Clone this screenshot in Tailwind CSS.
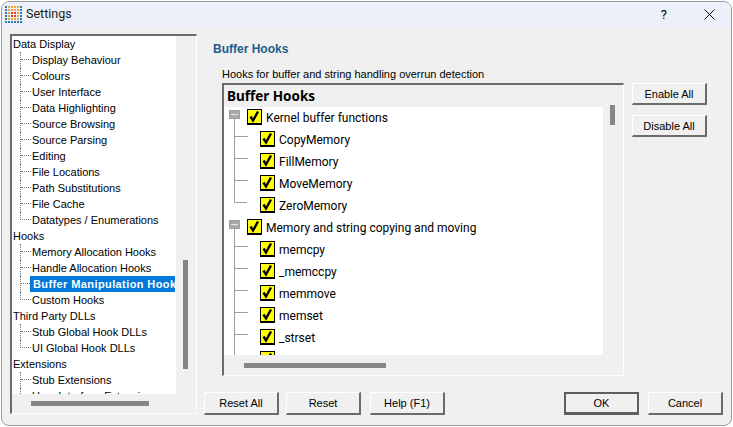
<!DOCTYPE html>
<html lang="en">
<head>
    <meta charset="UTF-8">
    <title>Settings</title>
    <script src="https://cdn.jsdelivr.net/npm/@tailwindcss/browser@4"></script>
</head>
<body class="w-[733px] h-[427px] overflow-hidden bg-white font-['Liberation_Sans',sans-serif] text-[11px] text-black">
    <svg class="hidden">
        <symbol id="check" viewBox="0 0 15 16">
            <rect x="0.5" y="0.5" width="14" height="14" fill="#ffff00" stroke="#000"/>
            <rect x="0" y="14" width="15" height="2" fill="#000"/>
            <path d="M3.5 7.5 6 11.5 11 2.5" fill="none" stroke="#000" stroke-width="2.4"/>
        </symbol>
    </svg>

    <div class="ml-px mt-px w-[731px] h-[425px] flex flex-col bg-[#f0f0f0] border border-[#9a9a9a] rounded-lg overflow-hidden">
        <!-- title bar -->
        <div class="h-[25px] shrink-0 flex items-center bg-[#ecf1f9]">
            <svg class="ml-[3px] w-[17px] h-[17px]" viewBox="0 0 17 17">
                <path fill="#2f78b8" d="M0 0h2v2H0zM15 0h2v2h-2zM0 3h2v2H0zM15 3h2v2h-2zM0 6h2v2H0zM15 6h2v2h-2zM0 9h2v2H0zM15 9h2v2h-2zM0 12h2v2H0zM15 12h2v2h-2zM0 15h2v2H0zM3 15h2v2H3zM6 15h2v2H6zM9 15h2v2H9zM12 15h2v2h-2zM15 15h2v2h-2z"/>
                <path fill="#f2a33a" d="M3 0h2v2H3zM6 0h2v2H6zM9 0h2v2H9zM12 0h2v2h-2zM3 3h2v2H3zM6 3h2v2H6zM9 3h2v2H9zM12 3h2v2h-2zM3 6h2v2H3zM12 6h2v2h-2zM3 9h2v2H3zM12 9h2v2h-2zM3 12h2v2H3zM6 12h2v2H6zM9 12h2v2H9zM12 12h2v2h-2z"/>
                <path fill="#d8402f" d="M6 6h2v2H6zM9 6h2v2H9zM6 9h2v2H6zM9 9h2v2H9z"/>
            </svg>
            <span class="ml-[4px] font-['Roboto',sans-serif] text-[12.5px] text-[#1a1a1a]">Settings</span>
            <span class="ml-auto mr-[37px] font-['Roboto',sans-serif] text-[13px]">?</span>
            <svg class="mr-[16px] w-[11px] h-[11px]" viewBox="0 0 11 11"><path d="M0.5 0.5l10 10M10.5 0.5l-10 10" stroke="#111" fill="none"/></svg>
        </div>

        <div class="flex flex-1 min-h-0 pl-[8px] pt-[7px]">
            <!-- left tree -->
            <div class="w-[187px] h-[380px] shrink-0 flex flex-col border-l-2 border-t-2 border-l-[#6b6b6b] border-t-[#6b6b6b] border-r border-b border-r-white border-b-white">
                <div class="flex flex-1 min-h-0">
                    <div class="w-[164px] h-[358px] overflow-hidden bg-white leading-[16px]">
                        <div class="h-4 pl-px whitespace-nowrap">Data Display</div>
                        <div class="h-4 flex pl-[8px]"><span class="w-[11px] h-full border-l border-dotted border-[#777]"><span class="block h-[8px] border-b border-dotted border-[#777]"></span></span><span class="ml-px">Display Behaviour</span></div>
                        <div class="h-4 flex pl-[8px]"><span class="w-[11px] h-full border-l border-dotted border-[#777]"><span class="block h-[8px] border-b border-dotted border-[#777]"></span></span><span class="ml-px">Colours</span></div>
                        <div class="h-4 flex pl-[8px]"><span class="w-[11px] h-full border-l border-dotted border-[#777]"><span class="block h-[8px] border-b border-dotted border-[#777]"></span></span><span class="ml-px">User Interface</span></div>
                        <div class="h-4 flex pl-[8px]"><span class="w-[11px] h-full border-l border-dotted border-[#777]"><span class="block h-[8px] border-b border-dotted border-[#777]"></span></span><span class="ml-px">Data Highlighting</span></div>
                        <div class="h-4 flex pl-[8px]"><span class="w-[11px] h-full border-l border-dotted border-[#777]"><span class="block h-[8px] border-b border-dotted border-[#777]"></span></span><span class="ml-px">Source Browsing</span></div>
                        <div class="h-4 flex pl-[8px]"><span class="w-[11px] h-full border-l border-dotted border-[#777]"><span class="block h-[8px] border-b border-dotted border-[#777]"></span></span><span class="ml-px">Source Parsing</span></div>
                        <div class="h-4 flex pl-[8px]"><span class="w-[11px] h-full border-l border-dotted border-[#777]"><span class="block h-[8px] border-b border-dotted border-[#777]"></span></span><span class="ml-px">Editing</span></div>
                        <div class="h-4 flex pl-[8px]"><span class="w-[11px] h-full border-l border-dotted border-[#777]"><span class="block h-[8px] border-b border-dotted border-[#777]"></span></span><span class="ml-px">File Locations</span></div>
                        <div class="h-4 flex pl-[8px]"><span class="w-[11px] h-full border-l border-dotted border-[#777]"><span class="block h-[8px] border-b border-dotted border-[#777]"></span></span><span class="ml-px">Path Substitutions</span></div>
                        <div class="h-4 flex pl-[8px]"><span class="w-[11px] h-full border-l border-dotted border-[#777]"><span class="block h-[8px] border-b border-dotted border-[#777]"></span></span><span class="ml-px">File Cache</span></div>
                        <div class="h-4 flex pl-[8px]"><span class="w-[11px] h-[8px] border-l border-b border-dotted border-[#777]"></span><span class="ml-px">Datatypes / Enumerations</span></div>
                        <div class="h-4 pl-px">Hooks</div>
                        <div class="h-4 flex pl-[8px]"><span class="w-[11px] h-full border-l border-dotted border-[#777]"><span class="block h-[8px] border-b border-dotted border-[#777]"></span></span><span class="ml-px">Memory Allocation Hooks</span></div>
                        <div class="h-4 flex pl-[8px]"><span class="w-[11px] h-full border-l border-dotted border-[#777]"><span class="block h-[8px] border-b border-dotted border-[#777]"></span></span><span class="ml-px">Handle Allocation Hooks</span></div>
                        <div class="h-4 flex pl-[8px]"><span class="w-[10px] shrink-0 h-full border-l border-dotted border-[#777]"><span class="block h-[8px] border-b border-dotted border-[#777]"></span></span><span class="pl-[3px] flex-1 min-w-0 mr-px bg-[#0078d7] text-white font-bold tracking-[0.4px] whitespace-nowrap overflow-hidden">Buffer Manipulation Hooks</span></div>
                        <div class="h-4 flex pl-[8px]"><span class="w-[11px] h-[8px] border-l border-b border-dotted border-[#777]"></span><span class="ml-px">Custom Hooks</span></div>
                        <div class="h-4 pl-px">Third Party DLLs</div>
                        <div class="h-4 flex pl-[8px]"><span class="w-[11px] h-full border-l border-dotted border-[#777]"><span class="block h-[8px] border-b border-dotted border-[#777]"></span></span><span class="ml-px">Stub Global Hook DLLs</span></div>
                        <div class="h-4 flex pl-[8px]"><span class="w-[11px] h-[8px] border-l border-b border-dotted border-[#777]"></span><span class="ml-px">UI Global Hook DLLs</span></div>
                        <div class="h-4 pl-px">Extensions</div>
                        <div class="h-4 flex pl-[8px]"><span class="w-[11px] h-full border-l border-dotted border-[#777]"><span class="block h-[8px] border-b border-dotted border-[#777]"></span></span><span class="ml-px">Stub Extensions</span></div>
                        <div class="h-4 flex pl-[8px]"><span class="w-[11px] h-[8px] border-l border-b border-dotted border-[#777]"></span><span class="ml-px whitespace-nowrap">User Interface Extensions</span></div>
                    </div>
                    <!-- vertical scrollbar -->
                    <div class="flex-1 pt-[224px] pl-[7px]"><div class="w-[5px] h-[109px] bg-[#868686]"></div></div>
                </div>
                <!-- horizontal scrollbar -->
                <div class="h-[19px] pt-[7px] pl-[19px]"><div class="w-[118px] h-[5px] bg-[#868686]"></div></div>
            </div>

            <!-- right column -->
            <div class="flex-1 flex flex-col min-w-0 pl-[6px]">
                <div class="h-[19px] pl-[10px] mt-[6px] text-[12px] font-bold text-[#1b5e8c]">Buffer Hooks</div>
                <div class="h-[16px] mt-[7px] pl-[19px] leading-[16px]">Hooks for buffer and string handling overrun detection</div>
                <div class="flex pl-[19px] mt-px">
                    <!-- hook grid -->
                    <div class="w-[402px] h-[293px] flex flex-col border-l-2 border-t-2 border-l-[#6b6b6b] border-t-[#6b6b6b] border-r border-b border-r-white border-b-white">
                        <div class="h-[22px] shrink-0 pl-[3px] font-['Noto_Sans',sans-serif] text-[13.5px] font-bold leading-[22px]">Buffer Hooks</div>
                        <div class="flex">
                            <div class="w-[379px] h-[248px] overflow-hidden bg-white font-['Roboto',sans-serif] text-[12px] leading-[22px]">
                                <div class="h-[22px] flex pl-[5px]">
                                    <span class="w-[18px] h-full flex flex-col"><span class="mt-[3px] w-[11px] h-[9px] bg-[#a8a8a8] border border-[#a0a0a0] flex items-center justify-center"><span class="w-[7px] h-px bg-[#e8e8e8]"></span></span><span class="ml-[5px] w-px flex-1 bg-[#a0a0a0]"></span></span>
                                    <svg class="mt-[2px] w-[15px] h-[16px]"><use href="#check"/></svg>
                                    <span class="ml-[4px]">Kernel buffer functions</span>
                                </div>
                                <div class="h-[22px] flex pl-[10px]"><span class="w-[26px] h-full border-l border-[#a0a0a0]"><span class="block w-[13px] h-[8px] border-b border-[#a0a0a0]"></span></span><svg class="mt-[2px] w-[15px] h-[16px]"><use href="#check"/></svg><span class="ml-[4px]">CopyMemory</span></div>
                                <div class="h-[22px] flex pl-[10px]"><span class="w-[26px] h-full border-l border-[#a0a0a0]"><span class="block w-[13px] h-[8px] border-b border-[#a0a0a0]"></span></span><svg class="mt-[2px] w-[15px] h-[16px]"><use href="#check"/></svg><span class="ml-[4px]">FillMemory</span></div>
                                <div class="h-[22px] flex pl-[10px]"><span class="w-[26px] h-full border-l border-[#a0a0a0]"><span class="block w-[13px] h-[8px] border-b border-[#a0a0a0]"></span></span><svg class="mt-[2px] w-[15px] h-[16px]"><use href="#check"/></svg><span class="ml-[4px]">MoveMemory</span></div>
                                <div class="h-[22px] flex pl-[10px]"><span class="w-[26px] h-[8px]"><span class="block w-[13px] h-[8px] border-l border-b border-[#a0a0a0]"></span></span><svg class="mt-[2px] w-[15px] h-[16px]"><use href="#check"/></svg><span class="ml-[4px]">ZeroMemory</span></div>
                                <div class="h-[22px] flex pl-[5px]">
                                    <span class="w-[18px] h-full flex flex-col"><span class="mt-[3px] w-[11px] h-[9px] bg-[#a8a8a8] border border-[#a0a0a0] flex items-center justify-center"><span class="w-[7px] h-px bg-[#e8e8e8]"></span></span><span class="ml-[5px] w-px flex-1 bg-[#a0a0a0]"></span></span>
                                    <svg class="mt-[2px] w-[15px] h-[16px]"><use href="#check"/></svg>
                                    <span class="ml-[4px]">Memory and string copying and moving</span>
                                </div>
                                <div class="h-[22px] flex pl-[10px]"><span class="w-[26px] h-full border-l border-[#a0a0a0]"><span class="block w-[13px] h-[8px] border-b border-[#a0a0a0]"></span></span><svg class="mt-[2px] w-[15px] h-[16px]"><use href="#check"/></svg><span class="ml-[4px]">memcpy</span></div>
                                <div class="h-[22px] flex pl-[10px]"><span class="w-[26px] h-full border-l border-[#a0a0a0]"><span class="block w-[13px] h-[8px] border-b border-[#a0a0a0]"></span></span><svg class="mt-[2px] w-[15px] h-[16px]"><use href="#check"/></svg><span class="ml-[4px]">_memccpy</span></div>
                                <div class="h-[22px] flex pl-[10px]"><span class="w-[26px] h-full border-l border-[#a0a0a0]"><span class="block w-[13px] h-[8px] border-b border-[#a0a0a0]"></span></span><svg class="mt-[2px] w-[15px] h-[16px]"><use href="#check"/></svg><span class="ml-[4px]">memmove</span></div>
                                <div class="h-[22px] flex pl-[10px]"><span class="w-[26px] h-full border-l border-[#a0a0a0]"><span class="block w-[13px] h-[8px] border-b border-[#a0a0a0]"></span></span><svg class="mt-[2px] w-[15px] h-[16px]"><use href="#check"/></svg><span class="ml-[4px]">memset</span></div>
                                <div class="h-[22px] flex pl-[10px]"><span class="w-[26px] h-full border-l border-[#a0a0a0]"><span class="block w-[13px] h-[8px] border-b border-[#a0a0a0]"></span></span><svg class="mt-[2px] w-[15px] h-[16px]"><use href="#check"/></svg><span class="ml-[4px]">_strset</span></div>
                                <div class="h-[22px] flex pl-[10px]"><span class="w-[26px] h-full border-l border-[#a0a0a0]"><span class="block w-[13px] h-[8px] border-b border-[#a0a0a0]"></span></span><svg class="mt-[2px] w-[15px] h-[16px]"><use href="#check"/></svg></div>
                            </div>
                            <!-- vertical scrollbar -->
                            <div class="-mt-[2px] pl-[7px]"><div class="w-[5px] h-5 bg-[#868686]"></div></div>
                        </div>
                        <!-- horizontal scrollbar -->
                        <div class="pt-[8px] pl-[20px]"><div class="w-[142px] h-[5px] bg-[#868686]"></div></div>
                    </div>
                    <div class="ml-[8px] flex flex-col gap-[10px]">
                        <button class="w-[75px] h-[22px] pt-px bg-[#f0f0f0] border-l border-t border-l-white border-t-white border-r-2 border-b-2 border-r-[#6b6b6b] border-b-[#6b6b6b]">Enable All</button>
                        <button class="w-[75px] h-[22px] pt-px bg-[#f0f0f0] border-l border-t border-l-white border-t-white border-r-2 border-b-2 border-r-[#6b6b6b] border-b-[#6b6b6b]">Disable All</button>
                    </div>
                </div>
                <!-- bottom buttons -->
                <div class="flex ml-[1px] mt-[16px]">
                    <button class="w-[75px] h-[23px] bg-[#f0f0f0] border-l border-t border-l-white border-t-white border-r-2 border-b-2 border-r-[#6b6b6b] border-b-[#6b6b6b]">Reset All</button>
                    <button class="ml-[7px] w-[75px] h-[23px] bg-[#f0f0f0] border-l border-t border-l-white border-t-white border-r-2 border-b-2 border-r-[#6b6b6b] border-b-[#6b6b6b]">Reset</button>
                    <button class="ml-[9px] w-[75px] h-[23px] bg-[#f0f0f0] border-l border-t border-l-white border-t-white border-r-2 border-b-2 border-r-[#6b6b6b] border-b-[#6b6b6b]">Help (F1)</button>
                    <button class="ml-[119px] w-[75px] h-[23px] bg-[#f0f0f0] border-2 border-[#5f5f5f] border-b-[3px]">OK</button>
                    <button class="ml-[9px] w-[75px] h-[23px] bg-[#f0f0f0] border-l border-t border-l-white border-t-white border-r-2 border-b-2 border-r-[#6b6b6b] border-b-[#6b6b6b]">Cancel</button>
                </div>
            </div>
        </div>
    </div>
</body>
</html>
